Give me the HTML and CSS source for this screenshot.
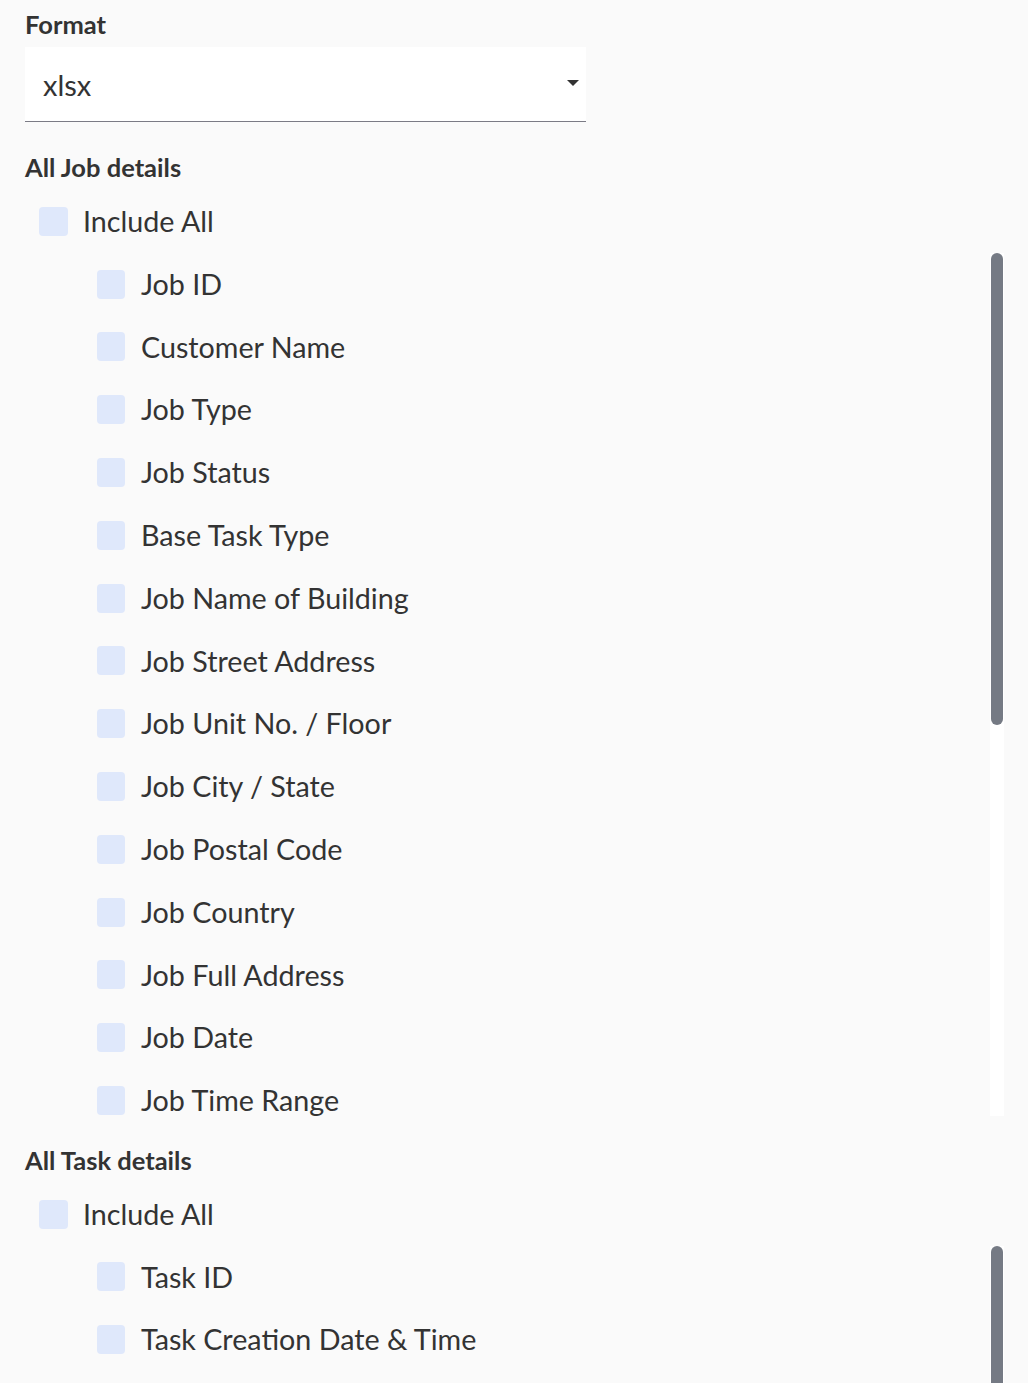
FILE: index.html
```html
<!DOCTYPE html>
<html>
<head>
<meta charset="utf-8">
<link rel="stylesheet" href="styles.css">
</head>
<body>
<div class="page">
  <div class="field-label">Format</div>
  <div class="select">
    <span class="select-value">xlsx</span>
    <span class="select-arrow"></span>
  </div>

  <section class="group">
    <div class="group-title">All Job details</div>
    <label class="row row-all"><span class="box"></span><span class="text">Include All</span></label>
    <div class="list">
      <div class="list-items">
        <label class="row row-sub"><span class="box"></span><span class="text">Job ID</span></label>
        <label class="row row-sub"><span class="box"></span><span class="text">Customer Name</span></label>
        <label class="row row-sub"><span class="box"></span><span class="text">Job Type</span></label>
        <label class="row row-sub"><span class="box"></span><span class="text">Job Status</span></label>
        <label class="row row-sub"><span class="box"></span><span class="text">Base Task Type</span></label>
        <label class="row row-sub"><span class="box"></span><span class="text">Job Name of Building</span></label>
        <label class="row row-sub"><span class="box"></span><span class="text">Job Street Address</span></label>
        <label class="row row-sub"><span class="box"></span><span class="text">Job Unit No. / Floor</span></label>
        <label class="row row-sub"><span class="box"></span><span class="text">Job City / State</span></label>
        <label class="row row-sub"><span class="box"></span><span class="text">Job Postal Code</span></label>
        <label class="row row-sub"><span class="box"></span><span class="text">Job Country</span></label>
        <label class="row row-sub"><span class="box"></span><span class="text">Job Full Address</span></label>
        <label class="row row-sub"><span class="box"></span><span class="text">Job Date</span></label>
        <label class="row row-sub"><span class="box"></span><span class="text">Job Time Range</span></label>
      </div>
      <div class="scrollbar"><div class="thumb thumb-job"></div></div>
    </div>
  </section>

  <section class="group">
    <div class="group-title">All Task details</div>
    <label class="row row-all"><span class="box"></span><span class="text">Include All</span></label>
    <div class="list">
      <div class="list-items">
        <label class="row row-sub"><span class="box"></span><span class="text">Task ID</span></label>
        <label class="row row-sub"><span class="box"></span><span class="text">Task Creation Date &amp; Time</span></label>
      </div>
      <div class="scrollbar"><div class="thumb thumb-task"></div></div>
    </div>
  </section>
</div>
</body>
</html>
```
FILE: styles.css
```css
html, body {
  margin: 0;
  padding: 0;
  background: #fafafa;
  overflow: hidden;
}

body {
  font-family: Lato, "Noto Sans", sans-serif;
  color: #333333;
}

.page {
  padding: 11px 24px 0 25px;
}

.field-label {
  font-size: 25.5px;
  font-weight: 700;
  line-height: 26px;
  color: #333333;
}

.select {
  margin-top: 10px;
  width: 561px;
  height: 75px;
  box-sizing: border-box;
  background: #ffffff;
  border-bottom: 1px solid #7b7b85;
  display: flex;
  align-items: center;
  justify-content: space-between;
  padding: 0 7px 0 18px;
}

.select-value {
  font-size: 29px;
  color: #333333;
}

.select-arrow {
  width: 0;
  height: 0;
  border-left: 6px solid transparent;
  border-right: 6px solid transparent;
  border-top: 6px solid #333333;
  margin-top: -2px;
}

.group {
  display: flex;
  flex-direction: column;
}

.group:first-of-type {
  margin-top: 32px;
}

.group + .group {
  margin-top: 31px;
}

.group-title {
  font-size: 25.5px;
  font-weight: 700;
  line-height: 26px;
  color: #333333;
  margin-bottom: 10px;
}

.row {
  display: flex;
  align-items: center;
  height: 62.8px;
  flex-shrink: 0;
  cursor: pointer;
}

.row-all {
  padding-left: 14px;
  gap: 15px;
}

.row-sub {
  padding-left: 72px;
  gap: 16px;
}

.box {
  width: 29px;
  height: 29px;
  border-radius: 4px;
  background: #dfe8fb;
  flex-shrink: 0;
}

.row-sub .box {
  width: 28px;
  height: 29px;
}

.text {
  font-size: 28.7px;
  line-height: 1;
  color: #333333;
  white-space: nowrap;
}

.list {
  height: 863px;
  display: flex;
}

.list-items {
  flex: 1;
  display: flex;
  flex-direction: column;
  overflow: hidden;
}

.scrollbar {
  width: 14px;
  flex-shrink: 0;
  background: #ffffff;
  padding: 0 1px;
  box-sizing: border-box;
}

.thumb {
  background: #757a84;
  border-radius: 6px;
}

.thumb-job {
  height: 472px;
}

.thumb-task {
  height: 472px;
}
```
